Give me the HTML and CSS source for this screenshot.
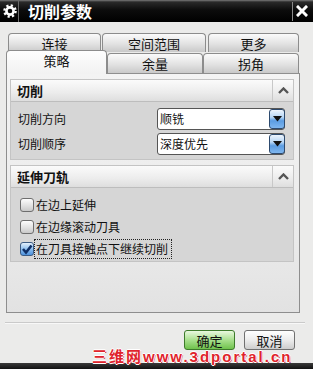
FILE: index.html
```html
<!DOCTYPE html>
<html>
	<head>
		<meta charset="UTF-8">
		<link rel="stylesheet" href="styles.css">
		<title>切削参数</title>
	</head>
	<body>
		<div class="window">
			<div class="titlebar">
				<span class="gear">
					<svg width="14" height="14" viewBox="0 0 14 14">
						<circle cx="7" cy="7" r="5.6" fill="none" stroke="#fff" stroke-width="2.4" stroke-dasharray="2.2 2.2"/>
						<circle cx="7" cy="7" r="3.6" fill="none" stroke="#fff" stroke-width="2.6"/>
					</svg>
				</span>
				<span class="title">切削参数</span>
				<span class="close">
					<svg width="12" height="12" viewBox="0 0 12 12">
						<path d="M2 2 L10 10 M10 2 L2 10" stroke="#fff" stroke-width="3" stroke-linecap="square"/>
					</svg>
				</span>
			</div>

			<div class="tabs">
				<div class="tab-row tab-row-back">
					<div class="tab tab-w1">连接</div>
					<div class="tab tab-w2">空间范围</div>
					<div class="tab tab-w3">更多</div>
				</div>
				<div class="tab-row tab-row-front">
					<div class="tab tab-active tab-w4">策略</div>
					<div class="tab tab-w5">余量</div>
					<div class="tab tab-w5">拐角</div>
				</div>
			</div>

			<div class="panel">
				<div class="group">
					<div class="group-head">
						<span class="group-title">切削</span>
						<span class="group-toggle">
							<svg width="11" height="7" viewBox="0 0 11 7"><polyline points="1,6 5.5,1.5 10,6" fill="none" stroke="#555" stroke-width="2.4"/></svg>
						</span>
					</div>
					<div class="group-body group-body-fields">
						<div class="field">
							<span class="field-label">切削方向</span>
							<div class="select">
								<span class="select-text">顺铣</span>
								<span class="select-btn"><svg width="9" height="6" viewBox="0 0 9 6"><polygon points="0,0 9,0 4.5,5.5" fill="#111"/></svg></span>
							</div>
						</div>
						<div class="field">
							<span class="field-label">切削顺序</span>
							<div class="select">
								<span class="select-text">深度优先</span>
								<span class="select-btn"><svg width="9" height="6" viewBox="0 0 9 6"><polygon points="0,0 9,0 4.5,5.5" fill="#111"/></svg></span>
							</div>
						</div>
					</div>
				</div>

				<div class="group">
					<div class="group-head">
						<span class="group-title">延伸刀轨</span>
						<span class="group-toggle">
							<svg width="11" height="7" viewBox="0 0 11 7"><polyline points="1,6 5.5,1.5 10,6" fill="none" stroke="#555" stroke-width="2.4"/></svg>
						</span>
					</div>
					<div class="group-body group-body-checks">
						<label class="check">
							<span class="check-box"></span>
							<span class="check-text">在边上延伸</span>
						</label>
						<label class="check">
							<span class="check-box"></span>
							<span class="check-text">在边缘滚动刀具</span>
						</label>
						<label class="check">
							<span class="check-box check-box-on">
								<svg width="12" height="12" viewBox="0 0 12 12"><path d="M2 6 L5 9.5 L10.5 2.5" fill="none" stroke="#0f2f66" stroke-width="2.6"/></svg>
							</span>
							<span class="check-text check-text-focus">在刀具接触点下继续切削</span>
						</label>
					</div>
				</div>
			</div>

			<div class="divider"></div>

			<div class="actions">
				<button class="btn btn-ok">确定</button>
				<button class="btn">取消</button>
			</div>

			<div class="watermark">三维网www.3dportal.cn</div>
			<div class="bottom-bar"></div>
		</div>
	</body>
</html>
```

FILE: styles.css
```css
body {
	margin: 0;
	font-family: "Noto Sans CJK SC", "Liberation Sans", sans-serif;
	font-size: 12px;
	color: #111;
}
.window {
	position: relative;
	width: 313px;
	height: 369px;
	background: #ebebea;
	display: flex;
	flex-direction: column;
	overflow: hidden;
}

/* title bar */
.titlebar {
	height: 22px;
	display: flex;
	align-items: center;
	background: linear-gradient(#7a7a7a 0, #2a2a2a 2px, #0c0c0c 10px, #000 100%);
	box-sizing: border-box;
}
.gear {
	width: 19px;
	height: 22px;
	display: flex;
	align-items: center;
	justify-content: center;
	border-right: 1px solid #6a6a6a;
	box-sizing: border-box;
}
.gear svg {
	margin-left: 1px;
}
.title {
	flex: 1;
	margin-left: 9px;
	color: #fff;
	font-size: 16px;
	font-weight: bold;
	line-height: 22px;
}
.close {
	width: 19px;
	height: 19px;
	margin-right: 2px;
	display: flex;
	align-items: center;
	justify-content: center;
	border-left: 1px solid #8a8a8a;
	box-sizing: border-box;
}

/* tabs */
.tabs {
	margin-top: 11px;
	position: relative;
	z-index: 2;
}
.tab-row {
	display: flex;
	align-items: flex-end;
}
.tab-row-back {
	padding-left: 8px;
	gap: 1px;
}
.tab-row-back .tab:last-child {
	margin-left: 1px;
}
.tab-row-front {
	margin-top: -2px;
	padding-left: 6px;
	height: 23px;
}
.tab {
	height: 19px;
	box-sizing: border-box;
	border: 1px solid #8c8c8c;
	border-bottom: 0;
	border-radius: 4px 4px 0 0;
	background: linear-gradient(#fbfbfb, #e2e2e2 55%, #c9c9c9);
	text-align: center;
	font-size: 13px;
	line-height: 20px;
}
.tab-row-front .tab {
	height: 20px;
	line-height: 20px;
}
.tab-row-front .tab.tab-active {
	height: 24px;
	margin-bottom: -1px;
	line-height: 20px;
	background: linear-gradient(#fdfdfd, #f2f2f2);
}
.tab-w1 { width: 93px; }
.tab-w2 { width: 104px; }
.tab-w3 { width: 91px; }
.tab-w4 { width: 101px; }
.tab-w5 { width: 96px; }

/* panel */
.panel {
	margin-left: 6px;
	width: 294px;
	height: 240px;
	box-sizing: border-box;
	border: 1px solid #8e8e8e;
	background: linear-gradient(#f3f3f3, #eaeaea 70%, #e2e2e2);
	padding: 5px 0 0 3px;
	position: relative;
	z-index: 1;
}
.group {
	width: 284px;
	margin-bottom: 5px;
	border: 1px solid #c4c4c4;
	box-sizing: border-box;
}
.group-head {
	height: 21px;
	display: flex;
	align-items: center;
	background: linear-gradient(#fbfbfb, #ececec 60%, #dedede);
	border-bottom: 1px solid #bdbdbd;
}
.group-title {
	flex: 1;
	padding-left: 6px;
	font-size: 13px;
	font-weight: bold;
	line-height: 21px;
}
.group-toggle {
	width: 20px;
	height: 21px;
	border-left: 1px solid #c8c8c8;
	display: flex;
	align-items: center;
	justify-content: center;
}
.group-body {
	background: #d6d6d6;
}
.group-body-fields {
	padding: 6px 0 4px 7px;
	display: flex;
	flex-direction: column;
	gap: 3px;
}
.field {
	display: flex;
	align-items: center;
	height: 22px;
}
.field-label {
	width: 139px;
	line-height: 16px;
}
.select {
	width: 128px;
	height: 22px;
	box-sizing: border-box;
	border: 1px solid #555;
	border-radius: 3px;
	background: #fff;
	display: flex;
	align-items: center;
}
.select-text {
	flex: 1;
	padding-left: 2px;
	line-height: 16px;
}
.select-btn {
	width: 16px;
	height: 20px;
	box-sizing: border-box;
	border: 1px solid #2d4a6e;
	border-radius: 3px;
	margin-right: -1px;
	background: linear-gradient(#eef5fd, #b7d6f5 40%, #5b9ce2 60%, #7fb6ee);
	display: flex;
	align-items: center;
	justify-content: center;
}
.group-body-checks {
	padding: 6px 0 1px 9px;
}
.check {
	display: flex;
	align-items: center;
	height: 22px;
}
.check-box {
	width: 14px;
	height: 14px;
	box-sizing: border-box;
	border: 1px solid #6e6e6e;
	border-radius: 3px;
	background: linear-gradient(#fdfdfd, #e4e4e4 50%, #c9c9c9);
	display: flex;
	align-items: center;
	justify-content: center;
}
.check-box-on {
	border-color: #3b5c85;
	background: linear-gradient(#e3f0fc, #8fc0ef 50%, #4d91dc);
}
.check-text {
	margin-left: 2px;
	line-height: 16px;
}
.check-text-focus {
	outline: 1px dotted #222;
	outline-offset: 1px;
	padding-right: 2px;
}

/* footer */
.divider {
	margin: 9px 8px 0 5px;
	height: 1px;
	background: #cacaca;
	border-bottom: 1px solid #f8f8f8;
}
.actions {
	margin-top: 6px;
	display: flex;
	justify-content: flex-end;
	gap: 9px;
	padding-right: 18px;
}
.btn {
	width: 51px;
	height: 20px;
	padding: 0;
	border: 1px solid #707070;
	border-radius: 3px;
	background: linear-gradient(#ffffff, #ececec 50%, #cdcdcd);
	font-family: "Noto Sans CJK SC", sans-serif;
	font-size: 13px;
	line-height: 17px;
	color: #111;
}
.btn-ok {
	border-color: #3d7a2b;
	background: linear-gradient(#e9f8e0, #a9e08e 50%, #6fc24c);
}
.watermark {
	position: absolute;
	left: 92px;
	top: 350px;
	font-family: "Liberation Sans", "Noto Sans CJK SC", sans-serif;
	font-size: 15px;
	font-weight: bold;
	letter-spacing: 2px;
	line-height: 13px;
	color: #e0232c;
	text-shadow: 1px 0 0 #fff, -1px 0 0 #fff, 0 1px 0 #fff, 0 -1px 0 #fff, 1px 1px 0 #b01018;
	z-index: 3;
}
.bottom-bar {
	position: absolute;
	left: 0;
	bottom: 0;
	width: 313px;
	height: 6px;
	background: linear-gradient(#3a3a3a, #111);
}
```
